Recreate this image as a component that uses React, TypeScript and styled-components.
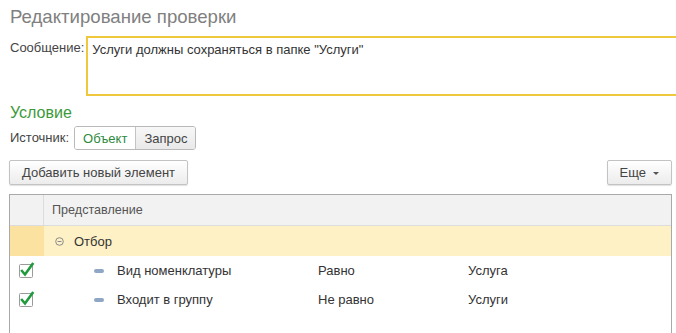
import React from "react";
import styled, { createGlobalStyle } from "styled-components";

const Global = createGlobalStyle`
  html, body { margin: 0; padding: 0; background: #fff; overflow: hidden; }
  body { font-family: "Liberation Sans", Arial, sans-serif; font-size: 13px; color: #333; }
`;

const Page = styled.div`
  width: 676px;
  height: 333px;
  overflow: hidden;
  display: flex;
  flex-direction: column;
  padding: 6px 0 0 9px;
  box-sizing: border-box;
`;

const Title = styled.div`
  font-size: 18.6px;
  line-height: 22px;
  color: #808080;
  padding-left: 1px;
`;

const MessageRow = styled.div`
  display: flex;
  align-items: flex-start;
  margin-top: 8px;
  margin-right: -20px;
`;

const Label = styled.div<{ $top?: number }>`
  font-size: 13px;
  line-height: 16px;
  color: #444;
  padding-left: 1px;
  padding-top: ${(p) => (p.$top ?? 4)}px;
  white-space: nowrap;
`;

const MessageBox = styled.div`
  flex: 1;
  margin-left: 2px;
  height: 60px;
  box-sizing: border-box;
  border: 2px solid #efc83e;
  padding: 4px 4px;
  font-size: 13px;
  line-height: 16px;
  color: #333;
`;

const Section = styled.div`
  margin-top: 7px;
  font-size: 16px;
  line-height: 20px;
  color: #3c9a3a;
  padding-left: 1px;
`;

const SourceRow = styled.div`
  display: flex;
  align-items: center;
  margin-top: 3px;
  gap: 5px;
`;

const Toggle = styled.div`
  display: flex;
  height: 24px;
  border: 1px solid #b9b9b9;
  border-radius: 3px;
  overflow: hidden;
  box-sizing: border-box;
`;

const ToggleItem = styled.div<{ $active?: boolean }>`
  display: flex;
  align-items: center;
  padding: 0 8px;
  font-size: 13px;
  color: ${(p) => (p.$active ? "#2e8a3e" : "#444")};
  background: ${(p) => (p.$active ? "#fff" : "linear-gradient(#f7f7f7, #e9e9e9)")};
  & + & { border-left: 1px solid #c4c4c4; }
`;

const ButtonRow = styled.div`
  display: flex;
  justify-content: space-between;
  margin-top: 10px;
  padding-right: 4px;
`;

const Button = styled.div`
  height: 25px;
  box-sizing: border-box;
  display: flex;
  align-items: center;
  padding: 0 12px;
  border: 1px solid #c3c3c3;
  border-radius: 2px;
  background: linear-gradient(#ffffff, #ececec);
  box-shadow: 0 1px 1px rgba(0,0,0,0.12);
  font-size: 13px;
  color: #444;
  gap: 7px;
`;

const Caret = styled.span`
  width: 0;
  height: 0;
  border-left: 3px solid transparent;
  border-right: 3px solid transparent;
  border-top: 3px solid #555;
  margin-top: 1px;
`;

const Table = styled.div`
  margin-top: 9px;
  margin-right: 4px;
  flex: 1;
  border: 1px solid #a9a9a9;
  border-bottom: none;
  display: flex;
  flex-direction: column;
`;

const Row = styled.div<{ $h: number; $bg?: string }>`
  display: grid;
  grid-template-columns: 34px 1fr;
  height: ${(p) => p.$h}px;
  background: ${(p) => p.$bg || "#fff"};
`;

const HeaderRow = styled(Row)`
  border-bottom: 1px solid #dcdcdc;
  box-sizing: border-box;
`;

const MarkCell = styled.div<{ $bg?: string; $sep?: boolean }>`
  display: flex;
  align-items: center;
  justify-content: center;
  background: ${(p) => p.$bg || "transparent"};
  border-right: ${(p) => (p.$sep ? "1px solid #dcdcdc" : "none")};
`;

const HeaderText = styled.div`
  display: flex;
  align-items: center;
  padding-left: 8px;
  font-size: 12.6px;
  color: #555;
`;

const GroupCell = styled.div`
  display: flex;
  align-items: center;
  padding-left: 11px;
  gap: 10px;
  font-size: 13px;
  color: #333;
`;

const DataCell = styled.div`
  display: grid;
  grid-template-columns: 274px 150px 1fr;
  align-items: center;
  font-size: 13px;
  color: #333;
`;

const NameCell = styled.div`
  display: flex;
  align-items: center;
  padding-left: 50px;
  gap: 13px;
`;

const Dash = styled.span`
  width: 10px;
  height: 4px;
  border-radius: 2px;
  background: #8fa7c4;
`;

const CheckBox = () => (
  <svg width="16" height="17" viewBox="0 0 16 17">
    <rect x="0.5" y="2.5" width="13" height="13" rx="1" fill="#fff" stroke="#9a9a9a" />
    <path d="M3 9 L6 12.5 L13.5 2" fill="none" stroke="#1f9a3c" strokeWidth="2.6" strokeLinecap="square" />
  </svg>
);

const CircleMinus = () => (
  <svg width="9" height="9" viewBox="0 0 9 9">
    <circle cx="4.5" cy="4.5" r="3.8" fill="none" stroke="#8a8a8a" strokeWidth="1" />
    <line x1="2.5" y1="4.5" x2="6.5" y2="4.5" stroke="#8a8a8a" strokeWidth="1" />
  </svg>
);

const rows = [
  { name: "Вид номенклатуры", cmp: "Равно", val: "Услуга" },
  { name: "Входит в группу", cmp: "Не равно", val: "Услуги" },
];

export default function App() {
  return (
    <>
      <Global />
      <Page>
        <Title>Редактирование проверки</Title>
        <MessageRow>
          <Label>Сообщение:</Label>
          <MessageBox>Услуги должны сохраняться в папке "Услуги"</MessageBox>
        </MessageRow>
        <Section>Условие</Section>
        <SourceRow>
          <Label $top={0}>Источник:</Label>
          <Toggle>
            <ToggleItem $active>Объект</ToggleItem>
            <ToggleItem>Запрос</ToggleItem>
          </Toggle>
        </SourceRow>
        <ButtonRow>
          <Button>Добавить новый элемент</Button>
          <Button>
            Еще <Caret />
          </Button>
        </ButtonRow>
        <Table>
          <HeaderRow $h={31} $bg="#f2f2f2">
            <MarkCell $sep />
            <HeaderText>Представление</HeaderText>
          </HeaderRow>
          <Row $h={30} $bg="#fef1c6">
            <MarkCell $bg="#fbe2a0" />
            <GroupCell>
              <CircleMinus />
              Отбор
            </GroupCell>
          </Row>
          {rows.map((r) => (
            <Row $h={29} key={r.name}>
              <MarkCell>
                <CheckBox />
              </MarkCell>
              <DataCell>
                <NameCell>
                  <Dash />
                  {r.name}
                </NameCell>
                <div>{r.cmp}</div>
                <div>{r.val}</div>
              </DataCell>
            </Row>
          ))}
        </Table>
      </Page>
    </>
  );
}
